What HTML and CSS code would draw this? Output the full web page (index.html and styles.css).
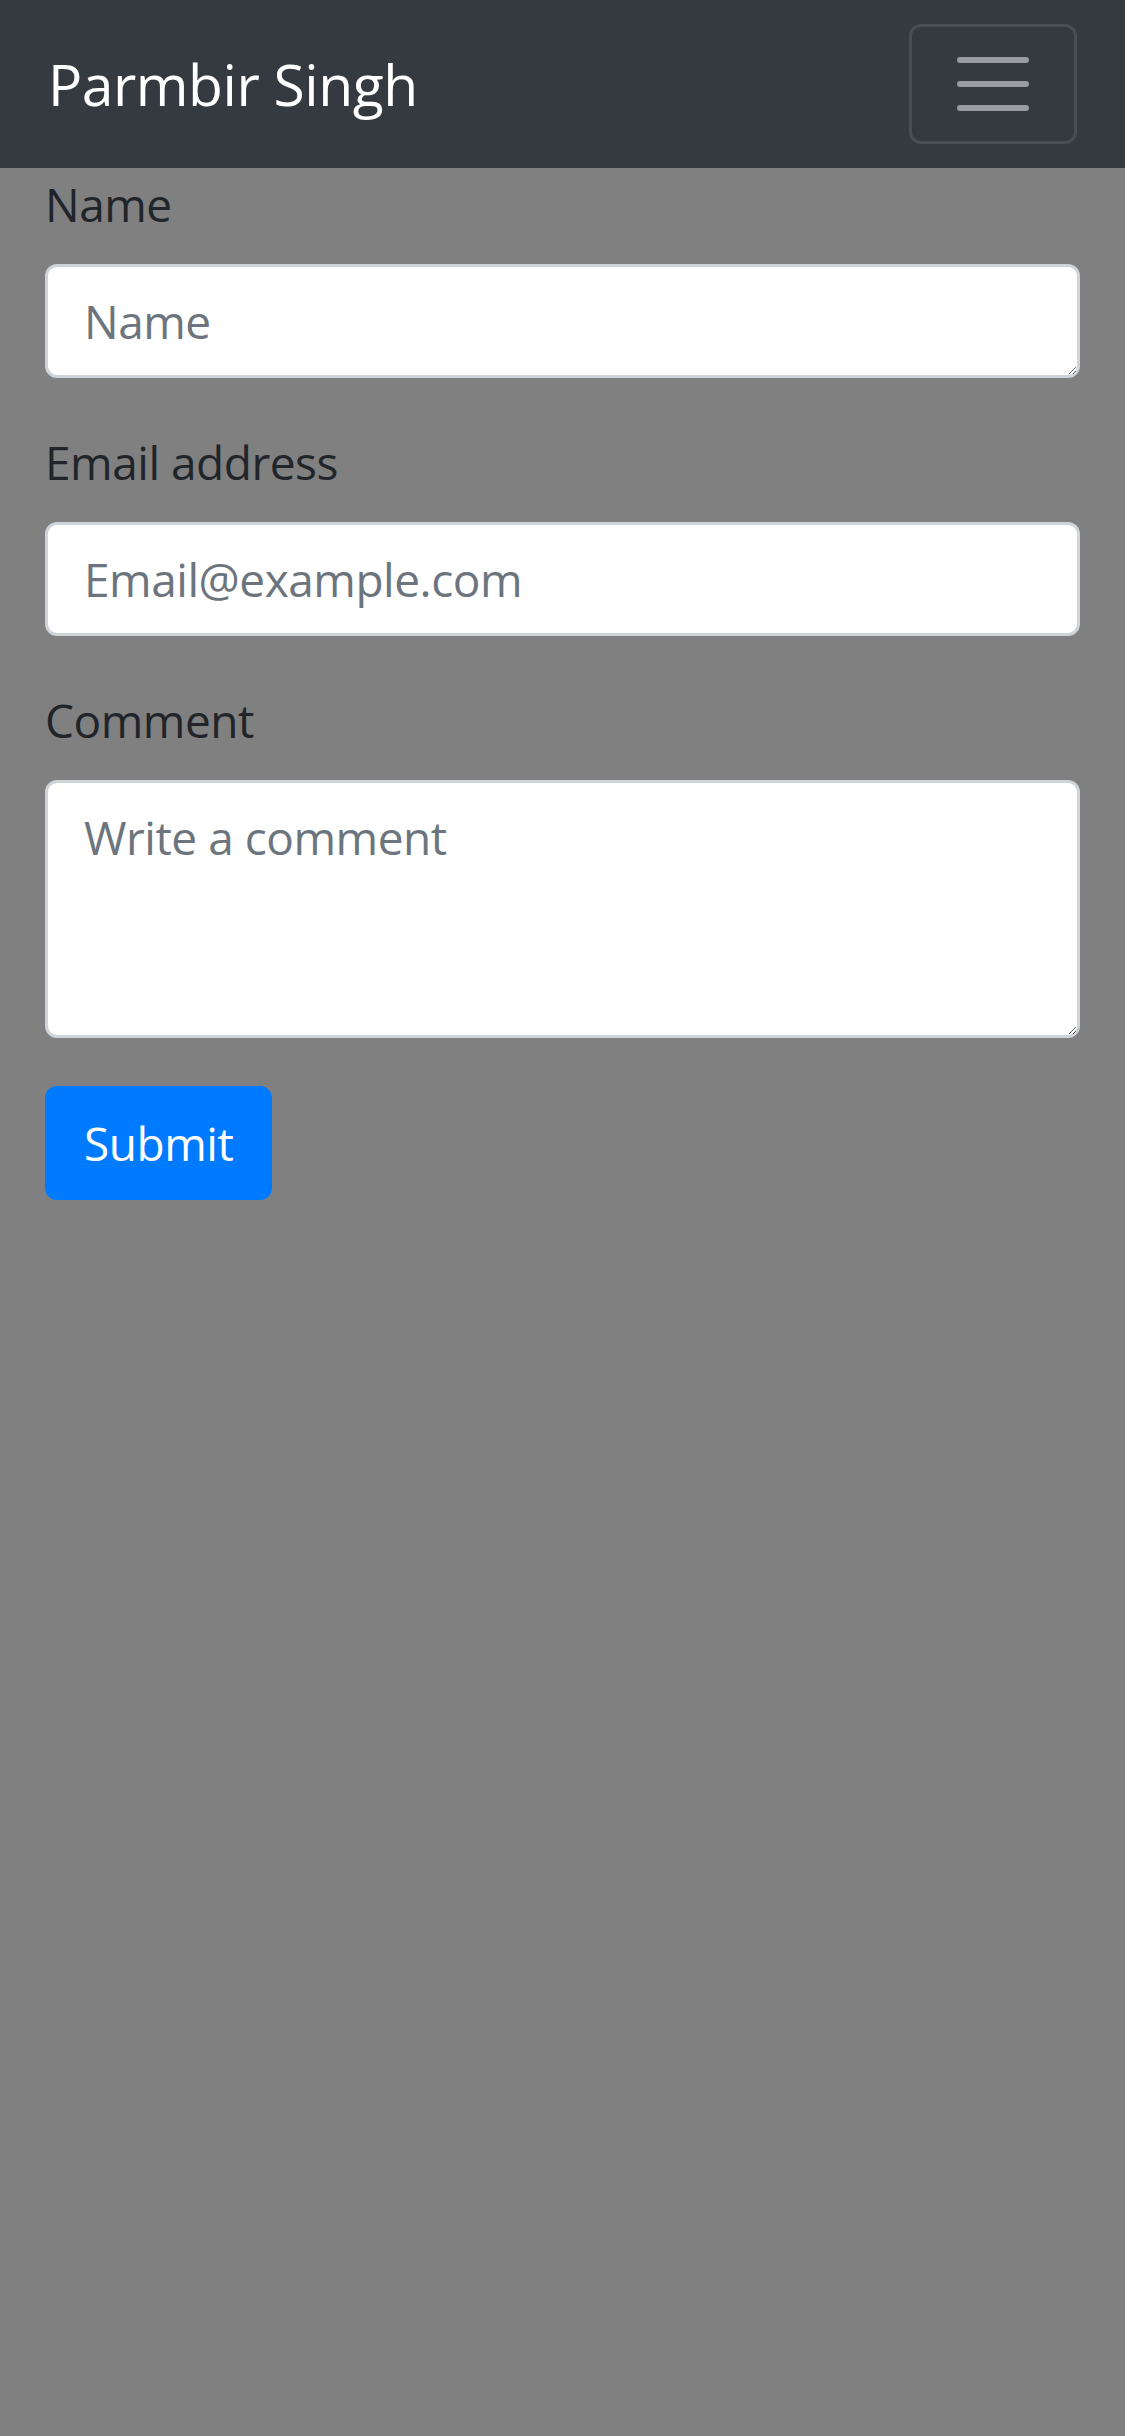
FILE: index.html
```html
<!DOCTYPE html>
<html lang="en">
<head>
<meta charset="utf-8">
<title>Parmbir Singh</title>
<link rel="stylesheet" href="styles.css">
</head>
<body>
<nav class="navbar">
  <a class="brand" href="#">Parmbir Singh</a>
  <button class="toggler" type="button" aria-label="Toggle navigation">
    <svg class="toggler-icon" viewBox="0 0 30 30" width="90" height="90">
      <path d="M4 7h22M4 15h22M4 23h22" stroke="rgba(255,255,255,0.5)" stroke-width="2" stroke-linecap="round" fill="none"/>
    </svg>
  </button>
</nav>
<main class="container">
  <form class="form">
    <div class="form-group">
      <label class="label" for="name">Name</label>
      <textarea class="control" id="name" rows="1" placeholder="Name"></textarea>
    </div>
    <div class="form-group">
      <label class="label" for="email">Email address</label>
      <input class="control input" id="email" type="email" placeholder="Email@example.com">
    </div>
    <div class="form-group">
      <label class="label" for="comment">Comment</label>
      <textarea class="control" id="comment" rows="3" placeholder="Write a comment"></textarea>
    </div>
    <button class="btn-primary" type="submit">Submit</button>
  </form>
</main>
</body>
</html>
```
FILE: styles.css
```css
* { box-sizing: border-box; }
html, body {
  margin: 0;
  padding: 0;
}
body {
  background: #808080;
  font-family: "Open Sans", "Noto Sans", "Liberation Sans", sans-serif;
  color: #212529;
  min-height: 2436px;
  letter-spacing: -0.03em;
}
.navbar {
  display: flex;
  align-items: center;
  justify-content: space-between;
  padding: 24px 48px;
  background: #343a40;
}
.brand {
  color: #fff;
  text-decoration: none;
  font-size: 57px;
  line-height: 90px;
  padding: 15px 0;
  white-space: nowrap;
}
.toggler {
  display: flex;
  padding: 12px 36px;
  background: transparent;
  border: 3px solid rgba(255,255,255,0.1);
  border-radius: 12px;
}
.toggler-icon { display: block; width: 90px; height: 90px; }
.container {
  padding: 0 45px;
}
.form-group {
  margin-bottom: 48px;
}
.label {
  display: inline-block;
  margin-bottom: 24px;
  font-size: 46px;
  line-height: 72px;
  color: #212529;
}
.control {
  display: block;
  width: 100%;
  margin: 0;
  padding: 18px 36px;
  font-family: inherit;
  font-size: 46px;
  line-height: 72px;
  letter-spacing: inherit;
  color: #495057;
  background: #fff;
  border: 3px solid #ced4da;
  border-radius: 12px;
  outline: none;
}
.input { height: 114px; }
textarea.control { resize: vertical; overflow: auto; }
.control::placeholder { color: #6c757d; opacity: 1; }
.btn-primary {
  display: inline-block;
  padding: 18px 36px;
  font-family: inherit;
  font-size: 46px;
  line-height: 72px;
  letter-spacing: inherit;
  color: #fff;
  background: #007bff;
  border: 3px solid #007bff;
  border-radius: 12px;
}
```
